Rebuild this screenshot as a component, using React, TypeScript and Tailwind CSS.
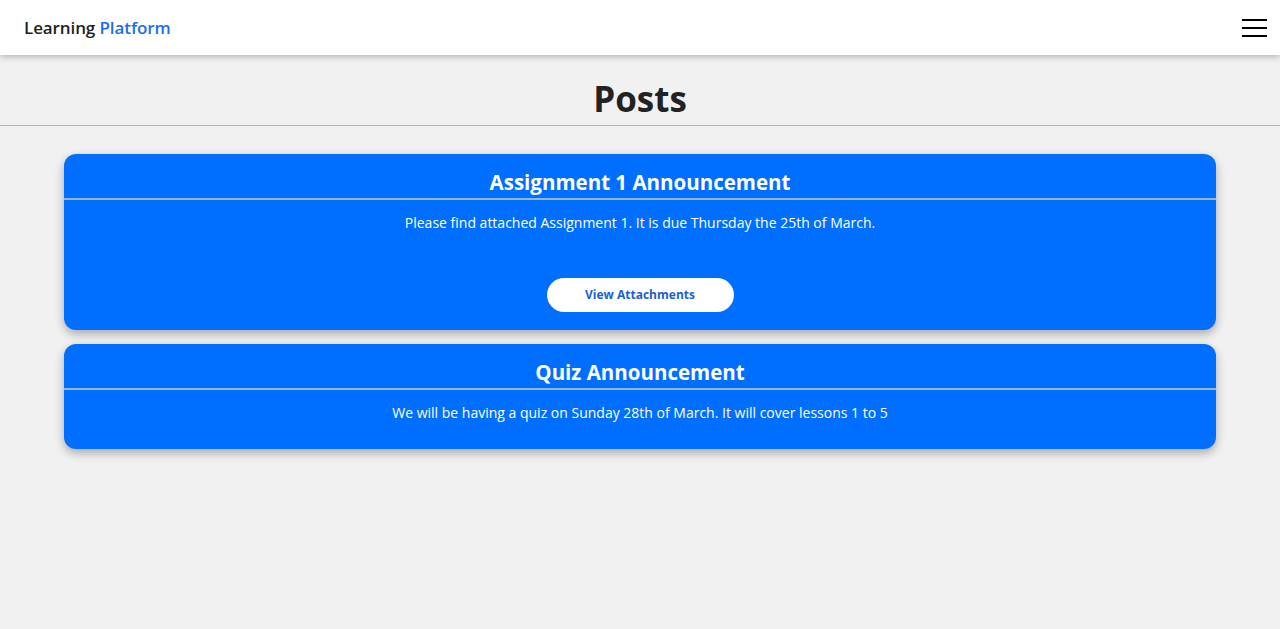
import React from 'react'

const posts = [
  {
    title: 'Assignment 1 Announcement',
    body: 'Please find attached Assignment 1. It is due Thursday the 25th of March.',
    attachments: true,
  },
  {
    title: 'Quiz Announcement',
    body: 'We will be having a quiz on Sunday 28th of March. It will cover lessons 1 to 5',
    attachments: false,
  },
]

const Navbar = () => {
  return (
    <nav className="flex h-[55px] items-center justify-between bg-white px-6 shadow-[0_2px_6px_rgba(0,0,0,0.25)] relative z-10">
      <div className="text-[17px] font-semibold tracking-[-0.1px] text-[#1e1e1e]">
        Learning <span className="text-[#1a6fe6]">Platform</span>
      </div>
      <button className="flex flex-col gap-[6px] mr-[-11px]">
        <span className="block h-[2px] w-[25px] bg-black" />
        <span className="block h-[2px] w-[25px] bg-black" />
        <span className="block h-[2px] w-[25px] bg-black" />
      </button>
    </nav>
  )
}

const PostCard = ({ title, body, attachments }: { title: string; body: string; attachments: boolean }) => {
  return (
    <div className="rounded-xl bg-[#006fff] text-white shadow-[0_4px_10px_rgba(0,0,0,0.3)]">
      <h2 className="pt-[15px] pb-[3px] text-center text-[20.5px] font-bold leading-[26px]">{title}</h2>
      <div className="h-[2px] bg-[#8fb9f3]" />
      <p className="pt-[13px] text-center text-[14px] leading-[20px]">{body}</p>
      {attachments ? (
        <div className="flex justify-center pt-[45px] pb-[18px]">
          <button className="h-[34px] w-[187px] rounded-full bg-white text-[12px] font-bold text-[#1a5fd6]">
            View Attachments
          </button>
        </div>
      ) : (
        <div className="h-[26px]" />
      )}
    </div>
  )
}

const App = () => {
  return (
    <div className="min-h-[629px] bg-[#f1f1f1] font-['Open_Sans',sans-serif] flex flex-col">
      <Navbar />
      <h1 className="pt-[22px] pb-[4px] text-center text-[35px] font-bold leading-[44px] text-[#222]">Posts</h1>
      <hr className="border-t border-[#b4b4b4]" />
      <div className="mx-auto mt-[28px] flex w-[90%] flex-col gap-[14px]">
        {posts.map((p) => (
          <PostCard key={p.title} {...p} />
        ))}
      </div>
    </div>
  )
}

export default App
